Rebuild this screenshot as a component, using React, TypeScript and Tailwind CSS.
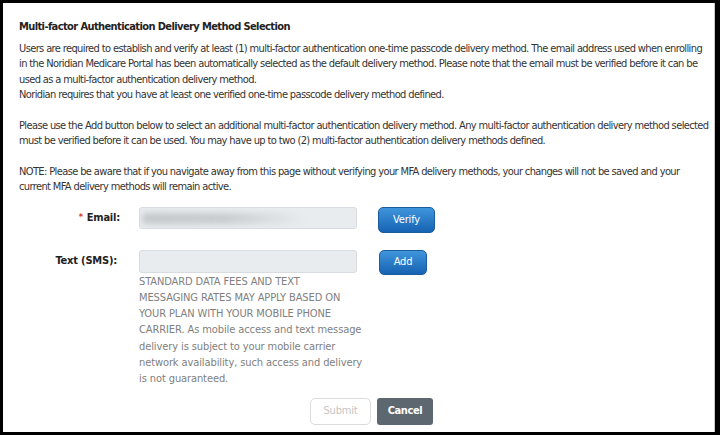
export default function App() {
  return (
    <div className="h-[435px] w-[720px] overflow-hidden bg-black">
      <div className="h-full border-t-[3px] border-l-[3px] border-r-[5px] border-b-[3px] border-black bg-white">
        <div className="h-full border-r border-[#c8c8c8] px-4 pt-4 font-['DejaVu_Sans_Condensed','DejaVu_Sans',sans-serif] font-stretch-condensed text-[11px] leading-[15.5px] tracking-[-0.62px] text-[#333]">
          <h1 className="text-[11px] font-bold tracking-[-0.6px] text-[#222]">Multi-factor Authentication Delivery Method Selection</h1>

          <p className="mt-[6px] whitespace-nowrap">
            Users are required to establish and verify at least (1) multi-factor authentication one-time passcode delivery method. The email address used when enrolling
            <br />
            in the Noridian Medicare Portal has been automatically selected as the default delivery method. Please note that the email must be verified before it can be
            <br />
            used as a multi-factor authentication delivery method.
            <br />
            Noridian requires that you have at least one verified one-time passcode delivery method defined.
          </p>

          <p className="mt-[15px] whitespace-nowrap">
            Please use the Add button below to select an additional multi-factor authentication delivery method. Any multi-factor authentication delivery method selected
            <br />
            must be verified before it can be used. You may have up to two (2) multi-factor authentication delivery methods defined.
          </p>

          <p className="mt-[15px] whitespace-nowrap">
            NOTE: Please be aware that if you navigate away from this page without verifying your MFA delivery methods, your changes will not be saved and your
            <br />
            current MFA delivery methods will remain active.
          </p>

          <div className="mt-[12px] grid grid-cols-[101px_218px_auto] gap-x-[19px]">
            <label className="flex h-[22px] items-center justify-end font-bold tracking-[-0.2px] text-[#222]">
              <span className="mr-1 text-[9px] text-[#d9363e]">*</span>Email:
            </label>
            <div className="relative h-[22px] overflow-hidden rounded-[3px] border border-[#d8dce0] bg-[#e9ecef]">
              <div className="absolute left-[2px] top-[5px] h-[11px] w-[165px] rounded bg-gradient-to-r from-[#c4c7ca] via-[#c8cbce] to-[#e9ecef] blur-[3px]" />
            </div>
            <div>
              <button className="ml-[2px] h-[26px] w-[57px] rounded-[5px] border border-[#1c5d9e] bg-gradient-to-b from-[#3f95dc] to-[#1563b2] text-[11px] tracking-[-0.2px] text-white">
                Verify
              </button>
            </div>

            <div className="col-span-3 h-[17px]" />

            <label className="flex h-[23px] items-center justify-end pr-[3px] font-bold tracking-[-0.2px] text-[#222]">Text (SMS):</label>
            <div>
              <div className="h-[23px] rounded-[3px] border border-[#d8dce0] bg-[#e9ecef]" />
              <p className="mt-[1px] whitespace-nowrap leading-[16.3px] tracking-[-0.1px] text-[#808080]">
                STANDARD DATA FEES AND TEXT
                <br />
                MESSAGING RATES MAY APPLY BASED ON
                <br />
                YOUR PLAN WITH YOUR MOBILE PHONE
                <br />
                CARRIER. As mobile access and text message
                <br />
                delivery is subject to your mobile carrier
                <br />
                network availability, such access and delivery
                <br />
                is not guaranteed.
              </p>
            </div>
            <div>
              <button className="ml-[3px] h-[25px] w-[48px] rounded-[5px] border border-[#1c5d9e] bg-gradient-to-b from-[#3f95dc] to-[#1563b2] text-[11px] tracking-[-0.2px] text-white">
                Add
              </button>
            </div>
          </div>

          <div className="mt-[10px] flex gap-[6px] pl-[291px]">
            <button className="h-[27px] w-[61px] rounded-[5px] border border-[#dcdcdc] bg-white text-[11px] tracking-[-0.2px] text-[#c4c4c4]">Submit</button>
            <button className="h-[27px] w-[56px] rounded-[3px] bg-[#5d6770] text-[11px] font-bold tracking-[-0.4px] text-white">Cancel</button>
          </div>
        </div>
      </div>
    </div>
  )
}
